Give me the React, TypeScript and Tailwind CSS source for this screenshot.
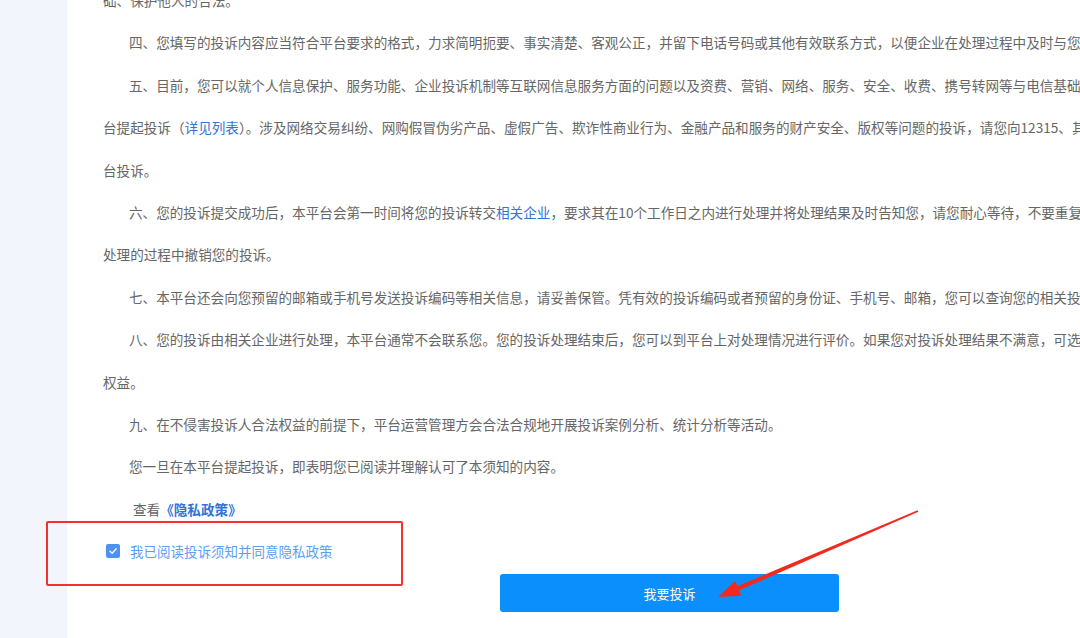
import React from 'react';

// Lines of the notice, one entry per visual line (the page is wider than the window, so long lines run off the right edge)
const lines: { text: React.ReactNode; indent?: string }[] = [
  { text: '础、保护他人的合法。' },
  {
    indent: 'pl-[26px]',
    text: '四、您填写的投诉内容应当符合平台要求的格式，力求简明扼要、事实清楚、客观公正，并留下电话号码或其他有效联系方式，以便企业在处理过程中及时与您联系。',
  },
  {
    indent: 'pl-[26px]',
    text: '五、目前，您可以就个人信息保护、服务功能、企业投诉机制等互联网信息服务方面的问题以及资费、营销、网络、服务、安全、收费、携号转网等与电信基础业务相关的问题向本平',
  },
  {
    text: (
      <>
        台提起投诉（<span className="text-[#2f74d9]">详见列表</span>）。涉及网络交易纠纷、网购假冒伪劣产品、虚假广告、欺诈性商业行为、金融产品和服务的财产安全、版权等问题的投诉，请您向12315、其他相关部门或平
      </>
    ),
  },
  { text: '台投诉。' },
  {
    indent: 'pl-[26px]',
    text: (
      <>
        六、您的投诉提交成功后，本平台会第一时间将您的投诉转交<span className="text-[#2f74d9]">相关企业</span>，要求其在10个工作日之内进行处理并将处理结果及时告知您，请您耐心等待，不要重复投诉，也不要在
      </>
    ),
  },
  { text: '处理的过程中撤销您的投诉。' },
  {
    indent: 'pl-[26px]',
    text: '七、本平台还会向您预留的邮箱或手机号发送投诉编码等相关信息，请妥善保管。凭有效的投诉编码或者预留的身份证、手机号、邮箱，您可以查询您的相关投诉。',
  },
  {
    indent: 'pl-[26px]',
    text: '八、您的投诉由相关企业进行处理，本平台通常不会联系您。您的投诉处理结束后，您可以到平台上对处理情况进行评价。如果您对投诉处理结果不满意，可选择其他途径维护自身',
  },
  { text: '权益。' },
  {
    indent: 'pl-[26px]',
    text: '九、在不侵害投诉人合法权益的前提下，平台运营管理方会合法合规地开展投诉案例分析、统计分析等活动。',
  },
  { indent: 'pl-[26px]', text: '您一旦在本平台提起投诉，即表明您已阅读并理解认可了本须知的内容。' },
  {
    indent: 'pl-[30px]',
    text: (
      <>
        查看<span className="font-bold text-[#2f74d9]">《隐私政策》</span>
      </>
    ),
  },
];

const App: React.FC = () => {
  return (
    <div
      className="relative flex h-[638px] w-[1080px] overflow-hidden bg-white"
      style={{ fontFamily: '"Noto Sans CJK SC", "Noto Sans", sans-serif' }}
    >
      {/* Left side strip */}
      <div className="w-[67px] shrink-0 bg-[#f2f5fc]" />

      {/* Notice body */}
      <div className="-mt-[21px] flex min-w-0 flex-1 flex-col pl-[36px] text-[13.6px] text-[#666]">
        {lines.map((line, i) => (
          <div key={i} className={`h-[42.4px] whitespace-nowrap leading-[42.4px] ${line.indent ?? ''}`}>
            {line.text}
          </div>
        ))}

        {/* Agreement checkbox */}
        <div className="flex h-[42.4px] items-center gap-[10px] pl-[3px]">
          <span className="flex h-[14px] w-[14px] items-center justify-center rounded-[2px] bg-[#4b93ef]">
            <svg width="10" height="10" viewBox="0 0 10 10" fill="none">
              <path d="M2 5.2 L4.2 7.3 L8.2 2.8" stroke="white" strokeWidth="1.4" strokeLinecap="round" strokeLinejoin="round" />
            </svg>
          </span>
          <span className="text-[13.5px] text-[#5d9ef2]">我已阅读投诉须知并同意隐私政策</span>
        </div>

        {/* Submit button */}
        <button className="mt-[2px] ml-[397px] flex h-[38px] w-[339px] items-center justify-center rounded-[3px] bg-[#0a8ffd] text-[13px] text-white">
          我要投诉
        </button>
      </div>

      {/* Red annotation box */}
      <div className="pointer-events-none absolute left-[46px] top-[521px] h-[65px] w-[357px] rounded-[2px] border-2 border-[#f4302a]" />

      {/* Red annotation arrow */}
      <svg className="pointer-events-none absolute left-0 top-0" width="1080" height="638" viewBox="0 0 1080 638">
        <polygon
          points="917.6,510.2 737.3,586.3 735,581 718,597 741.4,595.7 739.1,590.3 918.4,511.8"
          fill="#f22a1e"
        />
      </svg>
    </div>
  );
};

export default App;
